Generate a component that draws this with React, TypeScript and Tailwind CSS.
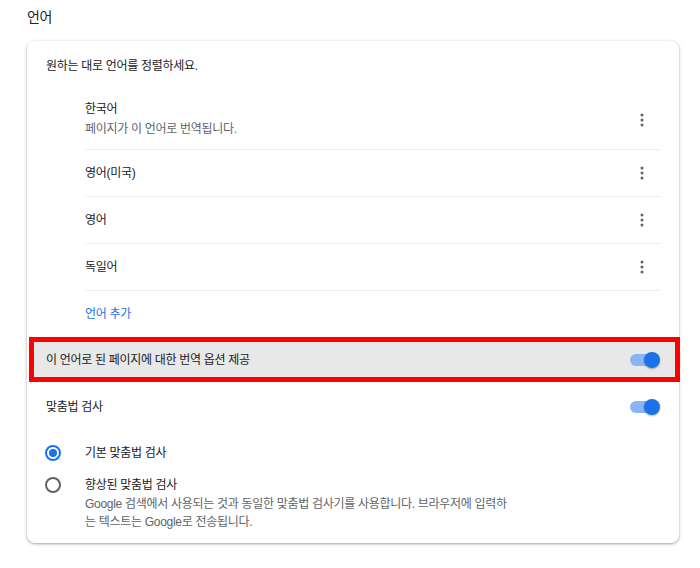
import React from "react";

const font = { fontFamily: '"Liberation Sans", "Noto Sans CJK KR", sans-serif' };

function Kebab() {
  return (
    <div className="w-[36px] h-[36px] flex items-center justify-center">
      <svg width="20" height="20" viewBox="0 0 20 20">
        <circle cx="10" cy="5" r="1.5" fill="#5f6368" />
        <circle cx="10" cy="10" r="1.5" fill="#5f6368" />
        <circle cx="10" cy="15" r="1.5" fill="#5f6368" />
      </svg>
    </div>
  );
}

function Toggle() {
  return (
    <div className="relative w-[30px] h-[16px] shrink-0">
      <div className="absolute left-0 top-[2px] w-[28px] h-[12px] rounded-full bg-[#8ab4f8]" />
      <div className="absolute right-0 top-0 w-[16px] h-[16px] rounded-full bg-[#1a73e8] shadow-[0_1px_2px_rgba(0,0,0,0.3)]" />
    </div>
  );
}

function Radio({ checked }: { checked: boolean }) {
  return checked ? (
    <div className="w-[16px] h-[16px] rounded-full border-2 border-[#1a73e8] flex items-center justify-center shrink-0">
      <div className="w-[8px] h-[8px] rounded-full bg-[#1a73e8]" />
    </div>
  ) : (
    <div className="w-[16px] h-[16px] rounded-full border-2 border-[#5f6368] shrink-0" />
  );
}

export default function App() {
  const langs = ["영어(미국)", "영어", "독일어"];
  return (
    <div
      className="w-[700px] h-[568px] bg-white pl-[27px] pt-[7px] text-[12px] tracking-[-0.3px] text-[#202124]"
      style={font}
    >
      <div className="h-[20px] leading-[20px] text-[14px]">언어</div>
      <div className="mt-[14px] w-[652px] rounded-[8px] bg-white shadow-[0_1px_2px_rgba(60,64,67,0.3),0_1px_3px_1px_rgba(60,64,67,0.15)]">
        <div className="h-[49px] flex items-center pl-[19px]">원하는 대로 언어를 정렬하세요.</div>
        <div className="pl-[58px] pr-[19px]">
          <div className="h-[60px] border-b border-[#eeeeee] flex items-start justify-between">
            <div className="pt-[9px]">
              <div className="leading-[20px]">한국어</div>
              <div className="leading-[20px] text-[#5f6368]">페이지가 이 언어로 번역됩니다.</div>
            </div>
            <div className="pt-[12px]">
              <Kebab />
            </div>
          </div>
          {langs.map((l) => (
            <div key={l} className="h-[47px] border-b border-[#eeeeee] flex items-center justify-between">
              <div>{l}</div>
              <Kebab />
            </div>
          ))}
          <div className="h-[45px] flex items-center text-[#1a73e8]">언어 추가</div>
        </div>
        <div className="mt-[1px] ml-[2px] mr-[-1px] h-[45px] border-[5px] border-[#ff0000] bg-[#e8e8e8] flex items-center justify-between pl-[12px] pr-[15px]">
          <div>이 언어로 된 페이지에 대한 번역 옵션 제공</div>
          <Toggle />
        </div>
        <div className="h-[50px] flex items-center justify-between pl-[19px] pr-[19px]">
          <div>맞춤법 검사</div>
          <Toggle />
        </div>
        <div className="h-[42px] flex items-center pl-[18px] gap-[24px]">
          <Radio checked />
          <div>기본 맞춤법 검사</div>
        </div>
        <div className="flex items-start pl-[18px] gap-[24px] pt-[1px] pb-[12px]">
          <div className="mt-[2px]">
            <Radio checked={false} />
          </div>
          <div>
            <div className="leading-[20px]">향상된 맞춤법 검사</div>
            <div className="leading-[18px] text-[#5f6368] w-[440px]">
              Google 검색에서 사용되는 것과 동일한 맞춤법 검사기를 사용합니다. 브라우저에 입력하
              <br />는 텍스트는 Google로 전송됩니다.
            </div>
          </div>
        </div>
      </div>
    </div>
  );
}
